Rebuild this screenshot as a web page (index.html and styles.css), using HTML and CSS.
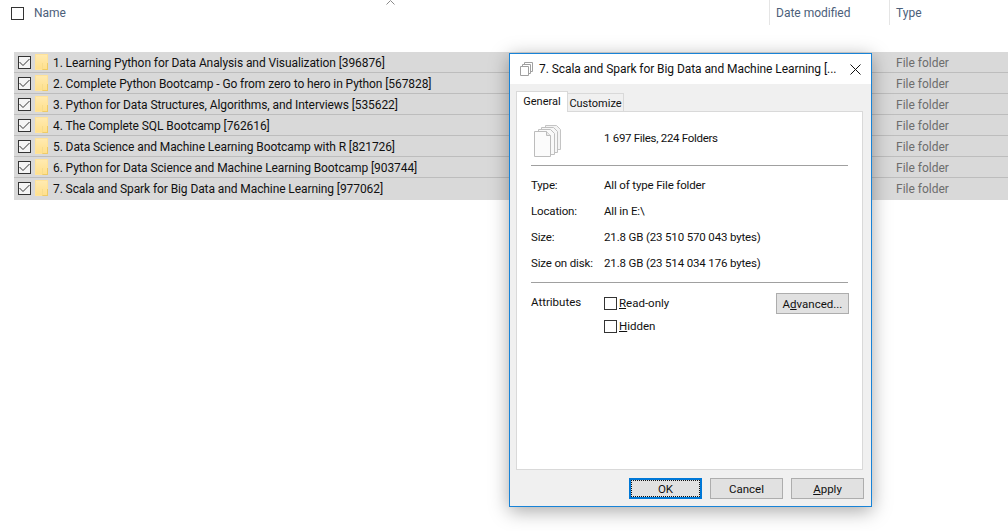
FILE: index.html
```html
<!DOCTYPE html>
<html lang="en">
<head>
    <meta charset="UTF-8">
    <title>Properties</title>
    <link rel="stylesheet" href="styles.css">
</head>
<body>

    <!-- Column headers -->
    <div class="list-header">
        <div class="col-name">
            <span class="check"></span>
            <span>Name</span>
            <svg class="sort-arrow" width="9" height="5" viewBox="0 0 9 5"><path d="M0.5 4.5 L4.5 0.5 L8.5 4.5" fill="none" stroke="#8a8a8a"/></svg>
        </div>
        <div class="col-date">Date modified</div>
        <div class="col-type">Type</div>
    </div>

    <!-- Selected folders -->
    <div class="file-list">
        <div class="file-row">
            <span class="check"><svg width="11" height="9" viewBox="0 0 11 9"><path d="M0.5 4 L4 7.5 L10.5 1" fill="none" stroke="#333" stroke-width="1"/></svg></span>
            <span class="folder"></span>
            <span class="file-name">1. Learning Python for Data Analysis and Visualization [396876]</span>
            <span class="file-type">File folder</span>
        </div>
        <div class="file-row">
            <span class="check"><svg width="11" height="9" viewBox="0 0 11 9"><path d="M0.5 4 L4 7.5 L10.5 1" fill="none" stroke="#333" stroke-width="1"/></svg></span>
            <span class="folder"></span>
            <span class="file-name">2. Complete Python Bootcamp - Go from zero to hero in Python [567828]</span>
            <span class="file-type">File folder</span>
        </div>
        <div class="file-row">
            <span class="check"><svg width="11" height="9" viewBox="0 0 11 9"><path d="M0.5 4 L4 7.5 L10.5 1" fill="none" stroke="#333" stroke-width="1"/></svg></span>
            <span class="folder"></span>
            <span class="file-name">3. Python for Data Structures, Algorithms, and Interviews [535622]</span>
            <span class="file-type">File folder</span>
        </div>
        <div class="file-row">
            <span class="check"><svg width="11" height="9" viewBox="0 0 11 9"><path d="M0.5 4 L4 7.5 L10.5 1" fill="none" stroke="#333" stroke-width="1"/></svg></span>
            <span class="folder"></span>
            <span class="file-name">4. The Complete SQL Bootcamp [762616]</span>
            <span class="file-type">File folder</span>
        </div>
        <div class="file-row">
            <span class="check"><svg width="11" height="9" viewBox="0 0 11 9"><path d="M0.5 4 L4 7.5 L10.5 1" fill="none" stroke="#333" stroke-width="1"/></svg></span>
            <span class="folder"></span>
            <span class="file-name">5. Data Science and Machine Learning Bootcamp with R [821726]</span>
            <span class="file-type">File folder</span>
        </div>
        <div class="file-row">
            <span class="check"><svg width="11" height="9" viewBox="0 0 11 9"><path d="M0.5 4 L4 7.5 L10.5 1" fill="none" stroke="#333" stroke-width="1"/></svg></span>
            <span class="folder"></span>
            <span class="file-name">6. Python for Data Science and Machine Learning Bootcamp [903744]</span>
            <span class="file-type">File folder</span>
        </div>
        <div class="file-row">
            <span class="check"><svg width="11" height="9" viewBox="0 0 11 9"><path d="M0.5 4 L4 7.5 L10.5 1" fill="none" stroke="#333" stroke-width="1"/></svg></span>
            <span class="folder"></span>
            <span class="file-name">7. Scala and Spark for Big Data and Machine Learning [977062]</span>
            <span class="file-type">File folder</span>
        </div>
    </div>

    <!-- Properties dialog -->
    <div class="dialog">
        <div class="title-bar">
            <svg class="title-icon" width="13" height="14" viewBox="0 0 13 14">
                <path d="M4.5 2.5 V0.5 H12.5 V9.5 H10.5" fill="none" stroke="#a0a0a0"/>
                <path d="M2.5 4.5 V2.5 H10.5 V11.5 H8.5" fill="#fff" stroke="#a0a0a0"/>
                <path d="M0.5 4.5 H8.5 V13.5 H0.5 Z" fill="#fff" stroke="#a0a0a0"/>
            </svg>
            <span class="title-text">7. Scala and Spark for Big Data and Machine Learning [...</span>
            <svg class="close-icon" width="11" height="11" viewBox="0 0 11 11"><path d="M0.5 0.5 L10.5 10.5 M10.5 0.5 L0.5 10.5" stroke="#111" stroke-width="1"/></svg>
        </div>
        <div class="dialog-body">
            <div class="tabs">
                <div class="tab active">General</div>
                <div class="tab">Customize</div>
            </div>
            <div class="panel">
                <div class="summary">
                    <svg class="files-icon" width="27" height="32" viewBox="0 0 27 32">
                        <path d="M11.5 0.5 H22.5 L26.5 4.5 V24.5 H11.5 Z" fill="#f4f4f4" stroke="#c4c4c4"/>
                        <path d="M7.5 2.5 H19.5 L23.5 6.5 V27.5 H7.5 Z" fill="#f7f7f7" stroke="#c0c0c0"/>
                        <path d="M4.5 4.5 H16.5 L20.5 8.5 V29.5 H4.5 Z" fill="#f9f9f9" stroke="#c0c0c0"/>
                        <path d="M0.5 6.5 H12.5 L16.5 10.5 V31.5 H0.5 Z" fill="#fbfbfb" stroke="#bcbcbc"/>
                        <path d="M12.5 6.5 V10.5 H16.5" fill="#e8e8e8" stroke="#bcbcbc"/>
                    </svg>
                    <span class="summary-text">1 697 Files, 224 Folders</span>
                </div>
                <div class="divider"></div>
                <div class="props">
                    <div class="prop"><span class="prop-label">Type:</span><span>All of type File folder</span></div>
                    <div class="prop"><span class="prop-label">Location:</span><span>All in E:\</span></div>
                    <div class="prop"><span class="prop-label">Size:</span><span>21.8 GB (23 510 570 043 bytes)</span></div>
                    <div class="prop"><span class="prop-label">Size on disk:</span><span>21.8 GB (23 514 034 176 bytes)</span></div>
                </div>
                <div class="divider"></div>
                <div class="attributes">
                    <span class="attr-label">Attributes</span>
                    <div class="attr-checks">
                        <div class="attr"><span class="check"></span><span><u>R</u>ead-only</span></div>
                        <div class="attr"><span class="check"></span><span><u>H</u>idden</span></div>
                    </div>
                    <button class="btn advanced">A<u>d</u>vanced...</button>
                </div>
            </div>
            <div class="dialog-buttons">
                <button class="btn default"><span class="focus-ring">OK</span></button>
                <button class="btn">Cancel</button>
                <button class="btn"><u>A</u>pply</button>
            </div>
        </div>
    </div>

</body>
</html>
```

FILE: styles.css
```css
* {
    margin: 0;
    padding: 0;
    box-sizing: border-box;
    font-family: Roboto, Arial, sans-serif;
}
body {
    background: white;
    font-size: 12px;
    color: #111;
    height: 531px;
    overflow: hidden;
}
.check {
    display: flex;
    align-items: center;
    justify-content: center;
    width: 13px;
    height: 13px;
    border: 1px solid #333;
    background: white;
    flex-shrink: 0;
}
.list-header {
    display: flex;
    height: 52px;
    color: #4c607a;
}
.col-name {
    width: 769px;
    height: 26px;
    padding-left: 11px;
    display: flex;
    align-items: center;
    gap: 10px;
    position: relative;
}
.sort-arrow {
    position: absolute;
    left: 386px;
    top: 0;
}
.col-date, .col-type {
    height: 25px;
    border-left: 1px solid #e5e5e5;
    padding-left: 6px;
    line-height: 27px;
}
.col-date { width: 120px; }
.file-list {
    margin-left: 14px;
    background: #d9d9d9;
    padding-bottom: 1px;
}
.file-row {
    display: flex;
    align-items: center;
    height: 21px;
    background: #d9d9d9;
    border-bottom: 1px solid #bdbdbd;
    padding-left: 4px;
}
.file-row:last-child { border-bottom-color: #d9d9d9; }
.file-row .check { background: #f4f4f4; }
.folder {
    width: 13px;
    height: 16px;
    margin-left: 4px;
    background: linear-gradient(#ffeab0, #ffe08c);
    border: 1px solid #ffe39a;
    position: relative;
    flex-shrink: 0;
}
.folder::after {
    content: "";
    position: absolute;
    right: -1px;
    bottom: -1px;
    width: 4px;
    height: 6px;
    border-right: 1px solid #eecb66;
    border-bottom: 1px solid #eecb66;
    border-left: 1px solid #f6dc8e;
}
.file-name {
    margin: 2px 0 0 5px;
    width: 843px;
    flex-shrink: 0;
    letter-spacing: -0.09px;
}
.file-type {
    margin-top: 2px;
    color: #6d6d6d;
}
.dialog {
    position: absolute;
    left: 509px;
    top: 53px;
    width: 363px;
    height: 454px;
    background: #f0f0f0;
    border: 1px solid #1883d7;
    box-shadow: 0 4px 18px rgba(0, 0, 0, 0.35);
    display: flex;
    flex-direction: column;
}
.title-bar {
    height: 30px;
    background: white;
    display: flex;
    align-items: center;
    padding: 0 10px;
    flex-shrink: 0;
    letter-spacing: -0.07px;
}
.title-icon { margin-right: 6px; flex-shrink: 0; }
.title-text { flex: 1; white-space: nowrap; }
.close-icon { flex-shrink: 0; }
.dialog-body {
    flex: 1;
    padding: 7px 7px 8px 6px;
    display: flex;
    flex-direction: column;
}
.tabs {
    display: flex;
    align-items: flex-end;
    height: 20px;
    position: relative;
    font-size: 11px;
}
.tab {
    width: 57px;
    height: 18px;
    border: 1px solid #d9d9d9;
    border-bottom: none;
    line-height: 19px;
    text-align: center;
    margin-left: -1px;
}
.tab.active {
    width: 52px;
    height: 21px;
    margin-left: 0;
    background: white;
    margin-bottom: -1px;
    position: relative;
    z-index: 1;
}
.panel {
    height: 359px;
    margin-right: 1px;
    background: white;
    border: 1px solid #d9d9d9;
    padding: 0 14px;
    font-size: 11.5px;
}
.summary {
    display: flex;
    align-items: flex-start;
    height: 53px;
    padding-top: 13px;
    padding-left: 3px;
}
.files-icon { margin-right: 43px; }
.summary-text {
    margin-top: 6px;
    letter-spacing: -0.3px;
}
.divider {
    height: 1px;
    background: #a0a0a0;
}
.props {
    padding-top: 6px;
    height: 116px;
    letter-spacing: -0.15px;
}
.prop {
    display: flex;
    height: 26px;
    align-items: center;
}
.prop-label { width: 73px; flex-shrink: 0; }
.attributes {
    display: flex;
    align-items: flex-start;
    padding-top: 10px;
}
.attr-label {
    width: 73px;
    margin-top: 2px;
    flex-shrink: 0;
}
.attr-checks {
    flex: 1;
    display: flex;
    flex-direction: column;
    gap: 9px;
    padding-top: 3px;
}
.attr {
    display: flex;
    align-items: center;
    gap: 2px;
    height: 14px;
}
.btn {
    width: 73px;
    height: 21px;
    padding-top: 1px;
    background: #e1e1e1;
    border: 1px solid #adadad;
    font-size: 11.5px;
    color: #111;
}
.advanced { margin-right: -1px; }
.dialog-buttons {
    display: flex;
    justify-content: flex-end;
    gap: 8px;
    padding-top: 8px;
}
.btn.default {
    border: 2px solid #0078d7;
    padding-top: 0;
}
.focus-ring {
    display: flex;
    align-items: center;
    justify-content: center;
    height: 100%;
    padding-top: 1px;
    outline: 1px dotted #111;
    outline-offset: -1px;
}
```
